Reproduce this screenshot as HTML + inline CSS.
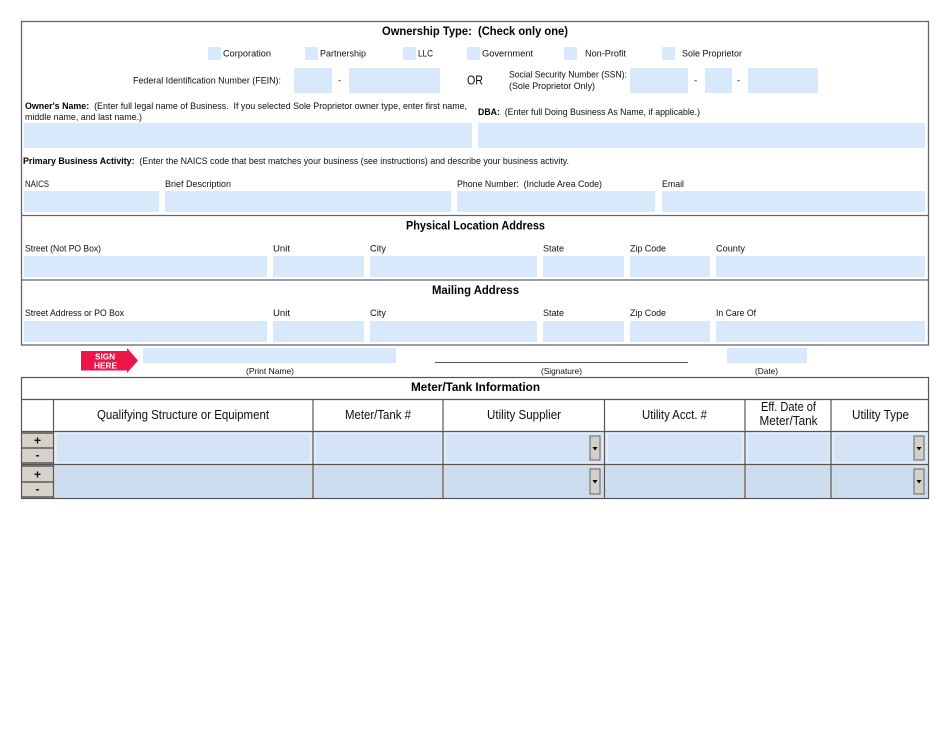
<!DOCTYPE html>
<html><head><meta charset="utf-8"><style>
html,body{margin:0;padding:0;background:#fff;width:950px;height:733px;overflow:hidden}
svg{display:block}
text{font-family:"Liberation Sans",sans-serif;fill:#111;white-space:pre}
.s{font-size:9.5px}
.b{font-size:12px;font-weight:bold;fill:#000}
.h{font-size:12.5px}
.p{font-size:8.5px}
.f{fill:#d7e9fb}
.l{stroke:#666;stroke-width:1.3;fill:none}
.t{stroke:#555;stroke-width:1.2;fill:none}
.bt{fill:#d4d0c8;stroke:#666;stroke-width:1}
</style></head><body>
<svg width="950" height="733" viewBox="0 0 950 733" xmlns="http://www.w3.org/2000/svg">
<filter id="bl"><feGaussianBlur stdDeviation="0.35"/></filter>
<g filter="url(#bl)">
<!-- fields -->
<g class="f">
<rect x="208" y="47" width="13" height="13"/><rect x="305" y="47" width="13" height="13"/><rect x="403" y="47" width="13" height="13"/><rect x="467" y="47" width="13" height="13"/><rect x="564" y="47" width="13" height="13"/><rect x="662" y="47" width="13" height="13"/>
<rect x="294" y="68" width="38" height="25"/><rect x="349" y="68" width="91" height="25"/>
<rect x="630" y="68" width="58" height="25"/><rect x="705" y="68" width="27" height="25"/><rect x="748" y="68" width="70" height="25"/>
<rect x="24" y="123" width="448" height="25"/><rect x="478" y="123" width="447" height="25"/>
<rect x="24" y="191" width="135" height="21"/><rect x="165" y="191" width="286" height="21"/><rect x="457" y="191" width="198" height="21"/><rect x="662" y="191" width="263" height="21"/>
<rect x="24" y="256" width="243" height="21"/><rect x="273" y="256" width="91" height="21"/><rect x="370" y="256" width="167" height="21"/><rect x="543" y="256" width="81" height="21"/><rect x="630" y="256" width="80" height="21"/><rect x="716" y="256" width="209" height="21"/>
<rect x="24" y="321" width="243" height="21"/><rect x="273" y="321" width="91" height="21"/><rect x="370" y="321" width="167" height="21"/><rect x="543" y="321" width="81" height="21"/><rect x="630" y="321" width="80" height="21"/><rect x="716" y="321" width="209" height="21"/>
<rect x="143" y="348" width="253" height="15"/><rect x="727" y="348" width="80" height="15"/>
</g>
<!-- main box -->
<rect class="l" x="21.5" y="21.5" width="907" height="323.5"/>
<path class="l" d="M21 215.5H929M21 280H929"/>
<path d="M435 362.5H688" stroke="#555" stroke-width="1"/>
<!-- headings -->
<text class="b" x="382" y="35" textLength="186" lengthAdjust="spacingAndGlyphs">Ownership Type:  (Check only one)</text>
<text class="b" x="406" y="229.500" textLength="139" lengthAdjust="spacingAndGlyphs">Physical Location Address</text>
<text class="b" x="432" y="294" textLength="87" lengthAdjust="spacingAndGlyphs">Mailing Address</text>
<text class="b" x="411" y="391" font-size="11.500" textLength="129" lengthAdjust="spacingAndGlyphs">Meter/Tank Information</text>
<!-- labels -->
<g>
<text x="223" y="56.500" textLength="48" lengthAdjust="spacingAndGlyphs" class="s">Corporation</text>
<text x="320" y="56.500" textLength="46" lengthAdjust="spacingAndGlyphs" class="s">Partnership</text>
<text x="418" y="56.500" textLength="15" lengthAdjust="spacingAndGlyphs" class="s">LLC</text>
<text x="482" y="56.500" textLength="51" lengthAdjust="spacingAndGlyphs" class="s">Government</text>
<text x="585" y="56.500" textLength="41" lengthAdjust="spacingAndGlyphs" class="s">Non-Profit</text>
<text x="682" y="56.500" textLength="60" lengthAdjust="spacingAndGlyphs" class="s">Sole Proprietor</text>
<text x="133" y="83.500" textLength="148" lengthAdjust="spacingAndGlyphs" class="s">Federal Identification Number (FEIN):</text>
<text x="338" y="83.500" class="s">-</text>
<text x="694" y="83.500" class="s">-</text>
<text x="737" y="83.500" class="s">-</text>
<text x="509" y="77.500" textLength="118" lengthAdjust="spacingAndGlyphs" class="s">Social Security Number (SSN):</text>
<text x="509" y="89" textLength="86" lengthAdjust="spacingAndGlyphs" class="s">(Sole Proprietor Only)</text>
<text x="25" y="109" textLength="442" lengthAdjust="spacingAndGlyphs" class="s"><tspan font-weight="bold" fill="#000">Owner's Name:</tspan>  (Enter full legal name of Business.  If you selected Sole Proprietor owner type, enter first name,</text>
<text x="25" y="120" textLength="117" lengthAdjust="spacingAndGlyphs" class="s">middle name, and last name.)</text>
<text x="478" y="115" textLength="222" lengthAdjust="spacingAndGlyphs" class="s"><tspan font-weight="bold" fill="#000">DBA:</tspan>  (Enter full Doing Business As Name, if applicable.)</text>
<text x="23" y="164" textLength="546" lengthAdjust="spacingAndGlyphs" class="s"><tspan font-weight="bold" fill="#000">Primary Business Activity:</tspan>  (Enter the NAICS code that best matches your business (see instructions) and describe your business activity.</text>
<text x="25" y="187" textLength="24" lengthAdjust="spacingAndGlyphs" class="s">NAICS</text>
<text x="165" y="187" textLength="66" lengthAdjust="spacingAndGlyphs" class="s">Brief Description</text>
<text x="457" y="187" textLength="145" lengthAdjust="spacingAndGlyphs" class="s">Phone Number:  (Include Area Code)</text>
<text x="662" y="187" textLength="22" lengthAdjust="spacingAndGlyphs" class="s">Email</text>
<text x="25" y="251.500" textLength="76" lengthAdjust="spacingAndGlyphs" class="s">Street (Not PO Box)</text>
<text x="273" y="251.500" textLength="17" lengthAdjust="spacingAndGlyphs" class="s">Unit</text>
<text x="370" y="251.500" textLength="16" lengthAdjust="spacingAndGlyphs" class="s">City</text>
<text x="543" y="251.500" textLength="21" lengthAdjust="spacingAndGlyphs" class="s">State</text>
<text x="630" y="251.500" textLength="36" lengthAdjust="spacingAndGlyphs" class="s">Zip Code</text>
<text x="716" y="251.500" textLength="29" lengthAdjust="spacingAndGlyphs" class="s">County</text>
<text x="25" y="316" textLength="99" lengthAdjust="spacingAndGlyphs" class="s">Street Address or PO Box</text>
<text x="273" y="316" textLength="17" lengthAdjust="spacingAndGlyphs" class="s">Unit</text>
<text x="370" y="316" textLength="16" lengthAdjust="spacingAndGlyphs" class="s">City</text>
<text x="543" y="316" textLength="21" lengthAdjust="spacingAndGlyphs" class="s">State</text>
<text x="630" y="316" textLength="36" lengthAdjust="spacingAndGlyphs" class="s">Zip Code</text>
<text x="716" y="316" textLength="40" lengthAdjust="spacingAndGlyphs" class="s">In Care Of</text>
</g>
<text x="467" y="84.500" font-size="12.500" textLength="16" lengthAdjust="spacingAndGlyphs">OR</text>
<!-- sign here -->
<path d="M81 351H127V348L138 360.500L127 373V370.500H81Z" fill="#ee1349"/>
<text x="95" y="359.500" font-size="8" font-weight="bold" style="fill:#fff" textLength="20" lengthAdjust="spacingAndGlyphs">SIGN</text>
<text x="94" y="368.500" font-size="8" font-weight="bold" style="fill:#fff" textLength="23" lengthAdjust="spacingAndGlyphs">HERE</text>
<text class="p" x="246" y="374" textLength="48" lengthAdjust="spacingAndGlyphs">(Print Name)</text>
<text class="p" x="541" y="374" textLength="41" lengthAdjust="spacingAndGlyphs">(Signature)</text>
<text class="p" x="755" y="374" textLength="23" lengthAdjust="spacingAndGlyphs">(Date)</text>
<!-- table rows -->
<rect x="54" y="432" width="875" height="32" fill="#e6edf4"/>
<rect x="54" y="465" width="875" height="33" fill="#dcdfe2"/>
<g fill="#d2e4f5">
<rect x="57" y="434" width="253" height="28"/><rect x="316" y="434" width="125" height="28"/><rect x="446" y="434" width="156" height="28"/><rect x="608" y="434" width="134" height="28"/><rect x="748" y="434" width="81" height="28"/><rect x="834" y="434" width="92" height="28"/>
</g>
<g fill="#cadcee">
<rect x="55" y="467" width="257" height="30"/><rect x="315" y="467" width="127" height="30"/><rect x="445" y="467" width="158" height="30"/><rect x="607" y="467" width="137" height="30"/><rect x="747" y="467" width="83" height="30"/><rect x="833" y="467" width="94" height="30"/>
</g>
<!-- +/- buttons -->
<rect x="21" y="432" width="33" height="66" fill="#777"/>
<g fill="#d6d2ca">
<rect x="22" y="434" width="31" height="13"/><rect x="22" y="449" width="31" height="13"/><rect x="22" y="467" width="31" height="14"/><rect x="22" y="483" width="31" height="13"/>
</g>
<g font-size="12" text-anchor="middle" font-weight="bold">
<text x="37.500" y="444.500">+</text><text x="37.500" y="459">-</text><text x="37.500" y="478.500">+</text><text x="37.500" y="493">-</text>
</g>
<!-- dropdowns -->
<rect class="bt" x="590" y="436" width="10" height="24"/><rect class="bt" x="590" y="469" width="10" height="25"/>
<rect class="bt" x="914" y="436" width="10" height="24"/><rect class="bt" x="914" y="469" width="10" height="25"/>
<path d="M592.500 447h5l-2.500 3.500zM592.500 480h5l-2.500 3.500zM916.500 447h5l-2.500 3.500zM916.500 480h5l-2.500 3.500z" fill="#000"/>
<!-- table lines -->
<rect class="t" x="21.500" y="377.500" width="907" height="121"/>
<path class="t" d="M21 399.500H929M21 431.500H929M21 464.500H929M53.500 399V498M313 399V498M443 399V498M604.500 399V498M745 399V498M831 399V498"/>
<!-- table headers -->
<g>
<text class="h" x="97" y="419" textLength="172" lengthAdjust="spacingAndGlyphs">Qualifying Structure or Equipment</text>
<text class="h" x="345" y="419" textLength="66" lengthAdjust="spacingAndGlyphs">Meter/Tank #</text>
<text class="h" x="487" y="419" textLength="74" lengthAdjust="spacingAndGlyphs">Utility Supplier</text>
<text class="h" x="642" y="419" textLength="65" lengthAdjust="spacingAndGlyphs">Utility Acct. #</text>
<text class="h" x="761" y="411" textLength="55" lengthAdjust="spacingAndGlyphs">Eff. Date of</text>
<text class="h" x="759.500" y="425" textLength="58" lengthAdjust="spacingAndGlyphs">Meter/Tank</text>
<text class="h" x="852" y="419" textLength="57" lengthAdjust="spacingAndGlyphs">Utility Type</text>
</g>
</g>
</svg>
</body></html>
